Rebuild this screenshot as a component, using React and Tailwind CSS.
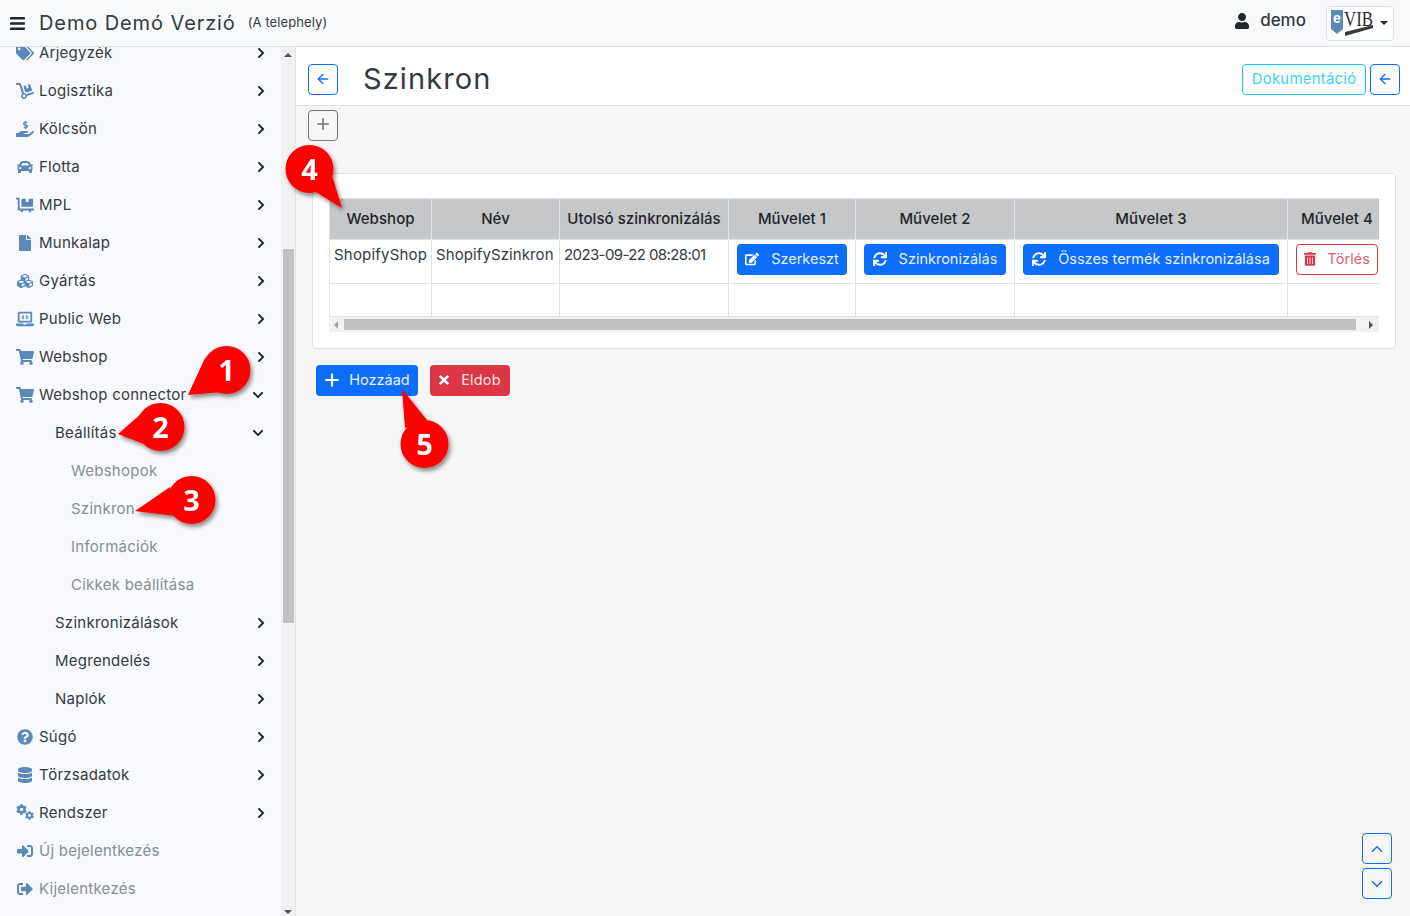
import { ArrowLeft, ChevronDown, ChevronUp, Plus } from "lucide-react";
import {
  FaBars, FaCar, FaChevronDown, FaChevronRight, FaCog, FaCubes, FaDatabase, FaDolly, FaDollyFlatbed,
  FaEdit, FaFile, FaHandHoldingUsd, FaLaptopCode, FaQuestionCircle, FaShoppingCart,
  FaSignInAlt, FaSignOutAlt, FaSync, FaTags, FaTimes, FaTrashAlt, FaUser,
} from "react-icons/fa";

// two cogs, one big at the top left and one small at the bottom right
function TwoCogs({ className }) {
  return (
    <span className={`${className} block`}>
      <FaCog className="absolute left-0 top-[-1px] h-[11px] w-[11px]" />
      <FaCog className="absolute left-[9px] top-[6px] h-[9px] w-[9px]" />
    </span>
  );
}

const menu = [
  { label: "Árjegyzék", icon: FaTags, arrow: "right" },
  { label: "Logisztika", icon: FaDolly, arrow: "right" },
  { label: "Kölcsön", icon: FaHandHoldingUsd, arrow: "right" },
  { label: "Flotta", icon: FaCar, arrow: "right" },
  { label: "MPL", icon: FaDollyFlatbed, arrow: "right" },
  { label: "Munkalap", icon: FaFile, arrow: "right" },
  { label: "Gyártás", icon: FaCubes, arrow: "right" },
  { label: "Public Web", icon: FaLaptopCode, arrow: "right" },
  { label: "Webshop", icon: FaShoppingCart, arrow: "right" },
  { label: "Webshop connector", icon: FaShoppingCart, arrow: "down" },
  { label: "Beállítás", level: 1, arrow: "down" },
  { label: "Webshopok", level: 2, muted: true },
  { label: "Szinkron", level: 2, muted: true },
  { label: "Információk", level: 2, muted: true },
  { label: "Cikkek beállítása", level: 2, muted: true },
  { label: "Szinkronizálások", level: 1, arrow: "right" },
  { label: "Megrendelés", level: 1, arrow: "right" },
  { label: "Naplók", level: 1, arrow: "right" },
  { label: "Súgó", icon: FaQuestionCircle, arrow: "right" },
  { label: "Törzsadatok", icon: FaDatabase, arrow: "right" },
  { label: "Rendszer", icon: TwoCogs, arrow: "right" },
  { label: "Új bejelentkezés", icon: FaSignInAlt, muted: true },
  { label: "Kijelentkezés", icon: FaSignOutAlt, muted: true },
];

const callouts = [
  { n: 1, cx: 226.5, cy: 370, tip: [188, 395], a: [205, 358], b: [222, 392] },
  { n: 2, cx: 160.5, cy: 427, tip: [118, 434], a: [142, 413], b: [144, 444] },
  { n: 3, cx: 191.5, cy: 500, tip: [135, 511], a: [170, 487], b: [175, 516] },
  { n: 4, cx: 309.5, cy: 169, tip: [342, 208], a: [331, 172], b: [314, 191] },
  { n: 5, cx: 424.5, cy: 444, tip: [402, 389], a: [405, 428], b: [427, 420] },
];

function MenuRow({ item }) {
  const Icon = item.icon;
  const indent = item.level === 2 ? "pl-[71px]" : item.level === 1 ? "pl-[55px]" : "pl-[39px]";
  return (
    <div className={`relative flex h-[38px] shrink-0 items-center ${indent}`}>
      {Icon && <Icon className="absolute left-[16px] top-[11px] h-4 w-[18px] text-[#5b88ba]" />}
      <span className={`text-[15px] tracking-[0.25px] ${item.muted ? "text-[#868d94]" : "text-[#343a40]"}`}>{item.label}</span>
      {item.arrow === "right" && <FaChevronRight className="absolute left-[255px] top-[13px] h-3 w-3 text-[#212529]" />}
      {item.arrow === "down" && <FaChevronDown className="absolute left-[252px] top-[13px] h-3 w-3 text-[#212529]" />}
    </div>
  );
}

function Callouts() {
  return (
    <svg className="pointer-events-none absolute left-0 top-0" width="1410" height="916">
      <defs>
        <filter id="sh" x="-30%" y="-30%" width="170%" height="170%">
          <feDropShadow dx="2" dy="3" stdDeviation="2" floodColor="#000" floodOpacity="0.45" />
        </filter>
      </defs>
      {callouts.map((c) => (
        <g key={c.n} filter="url(#sh)">
          <polygon points={`${c.tip[0]},${c.tip[1]} ${c.a[0]},${c.a[1]} ${c.b[0]},${c.b[1]}`} fill="#ff0000" />
          <circle cx={c.cx} cy={c.cy} r="24" fill="#ff0000" />
          <text x={c.cx} y={c.cy + 10.5} textAnchor="middle" fill="#fff" fontSize="29" fontWeight="700" fontFamily="'Open Sans', sans-serif">
            {c.n}
          </text>
        </g>
      ))}
    </svg>
  );
}

function ActionButton({ icon: Icon, label, width }) {
  return (
    <button className={`flex h-[31px] items-center justify-center gap-[12px] whitespace-nowrap rounded-[4px] bg-[#0d6efd] pb-[2px] text-[14.5px] tracking-normal text-[#e6f0ff] ${width}`}>
      <Icon className="h-[14px] w-[14px] text-white" />
      {label}
    </button>
  );
}

export default function App() {
  return (
    <div className="relative flex h-screen w-full flex-col overflow-hidden bg-[#f6f6f6] font-['Inter',sans-serif] text-[#212529]">
      <header className="flex h-[47px] shrink-0 items-center border-b border-[#dee2e6] bg-[#f8f9fa] pr-4">
        <FaBars className="ml-[9px] h-[17px] w-[17px] text-[#212529]" />
        <span className="ml-[13px] text-[20px] tracking-[0.9px] text-[#343a40]">Demo Demó Verzió</span>
        <span className="ml-3 text-[13px] tracking-[0.1px] text-[#343a40]">(A telephely)</span>
        <FaUser className="-mt-[4px] ml-auto h-4 w-4 text-[#212529]" />
        <span className="-mt-[4px] ml-[10px] text-[17px] font-medium text-[#343a40]">demo</span>
        <div className="ml-5 flex h-[35px] w-[68px] items-center rounded-[4px] border border-[#dee2e6] bg-white pl-1">
          <svg width="44" height="28" viewBox="0 0 44 28" className="overflow-visible">
            <polygon points="0,1 12,1 12,20 6,25 0,20" fill="#5b88ba" />
            <polygon points="14,27 14,23 42,16 42,19" fill="#3a3a3a" />
            <text x="2" y="14" fontSize="14" fontWeight="700" fontFamily="'Liberation Sans', sans-serif" fill="#fff">e</text>
            <text x="13" y="17" fontSize="20" textLength="29" lengthAdjust="spacingAndGlyphs" fontFamily="'Liberation Serif', serif" fill="#2b2b2b">VIB</text>
          </svg>
          <span className="ml-[5px] border-x-[4px] border-t-[4px] border-x-transparent border-t-[#212529]" />
        </div>
      </header>

      <div className="flex min-h-0 flex-1">
        <aside className="flex w-[281px] shrink-0 flex-col overflow-hidden bg-[#f8f9fc]">
          <div className="-mt-[13px] flex flex-col">
            {menu.map((item) => (
              <MenuRow key={item.label} item={item} />
            ))}
          </div>
        </aside>

        {/* scrollbar of the menu */}
        <div className="flex w-[15px] shrink-0 flex-col items-center border-r border-[#e3e3e3] bg-[#f1f1f1]">
          <span className="mt-[6px] border-x-[4px] border-b-[4px] border-x-transparent border-b-[#505050]" />
          <div className="mt-[192px] h-[374px] w-[11px] bg-[#c1c1c1]" />
          <span className="mb-[2px] mt-auto border-x-[4px] border-t-[4px] border-x-transparent border-t-[#505050]" />
        </div>

        <main className="min-w-0 flex-1">
          <div className="flex h-[59px] items-center border-b border-[#dee2e6] bg-white pl-3 pr-[10px] pt-[6px]">
            <button className="flex h-[31px] w-[30px] items-center justify-center rounded-[4px] border border-[#0d6efd] text-[#0d6efd]">
              <ArrowLeft size={16} />
            </button>
            <h1 className="ml-[25px] text-[29px] font-normal tracking-[1.1px] text-[#343a40]">Szinkron</h1>
            <button className="ml-auto flex h-[31px] w-[124px] items-center justify-center rounded-[4px] border border-[#0dcaf0] text-[15px] tracking-[0.2px] text-[#3cd3f2]">
              Dokumentáció
            </button>
            <button className="ml-1 flex h-[31px] w-[30px] items-center justify-center rounded-[4px] border border-[#0d6efd] text-[#0d6efd]">
              <ArrowLeft size={16} />
            </button>
          </div>

          <button className="ml-3 mt-1 flex h-[31px] w-[30px] items-center justify-center rounded-[4px] border border-[#6c757d] pb-[3px] text-[#6c757d]">
            <Plus size={18} />
          </button>

          <section className="ml-4 mr-[14px] mt-8 rounded-[4px] border border-[#dee2e6] bg-white pb-4 pl-4 pr-4 pt-6">
            <div className="overflow-hidden">
              <table className="w-[1070px] table-fixed border-collapse text-[15px]">
                <colgroup>
                  <col className="w-[102px]" />
                  <col className="w-[128px]" />
                  <col className="w-[169px]" />
                  <col className="w-[127px]" />
                  <col className="w-[159px]" />
                  <col className="w-[273px]" />
                  <col className="w-[112px]" />
                </colgroup>
                <thead>
                  <tr className="h-[41px] bg-[#c6c7c9]">
                    {["Webshop", "Név", "Utolsó szinkronizálás", "Művelet 1", "Művelet 2", "Művelet 3", "Művelet 4"].map((h) => (
                      <th key={h} className="whitespace-nowrap border border-[#dee2e6] px-1 text-center font-medium tracking-[0.05px] text-[#212529]">
                        <span className={h === "Művelet 4" ? "-ml-[13px]" : ""}>{h}</span>
                      </th>
                    ))}
                  </tr>
                </thead>
                <tbody>
                  <tr className="h-[44px]">
                    <td className="whitespace-nowrap border border-[#dee2e6] px-1 pt-[4px] align-top tracking-[0.2px] text-[#343a40]">ShopifyShop</td>
                    <td className="whitespace-nowrap border border-[#dee2e6] px-1 pt-[4px] align-top tracking-[0.1px] text-[#343a40]">ShopifySzinkron</td>
                    <td className="whitespace-nowrap border border-[#dee2e6] px-1 pt-[4px] align-top tracking-[-0.6px] text-[#343a40]">2023-09-22 08:28:01</td>
                    <td className="border border-[#dee2e6] pl-2 pt-1 align-top">
                      <ActionButton icon={FaEdit} label="Szerkeszt" width="w-[110px]" />
                    </td>
                    <td className="border border-[#dee2e6] pl-2 pt-1 align-top">
                      <ActionButton icon={FaSync} label="Szinkronizálás" width="w-[142px]" />
                    </td>
                    <td className="border border-[#dee2e6] pl-2 pt-1 align-top">
                      <ActionButton icon={FaSync} label="Összes termék szinkronizálása" width="w-[256px]" />
                    </td>
                    <td className="border border-[#dee2e6] pl-2 pt-1 align-top">
                      <button className="flex h-[31px] w-[82px] items-center justify-center gap-[11px] rounded-[4px] border border-[#dc3545] pb-[2px] text-[14.5px] text-[#e4606d]">
                        <FaTrashAlt className="h-[14px] w-[12px] text-[#dc3545]" />
                        Törlés
                      </button>
                    </td>
                  </tr>
                  <tr className="h-[33px]">
                    {[0, 1, 2, 3, 4, 5, 6].map((i) => (
                      <td key={i} className="border border-[#dee2e6]" />
                    ))}
                  </tr>
                </tbody>
              </table>
              {/* scrollbar of the table */}
              <div className="flex h-[15px] items-center bg-[#f1f1f1]">
                <span className="ml-[5px] border-y-[4px] border-r-[4px] border-y-transparent border-r-[#a3a3a3]" />
                <div className="ml-[6px] h-[11px] w-[1012px] bg-[#c1c1c1]" />
                <span className="ml-[13px] border-y-[4px] border-l-[4px] border-y-transparent border-l-[#505050]" />
              </div>
            </div>
          </section>

          <div className="ml-5 mt-4 flex gap-3">
            <button className="flex h-[31px] w-[102px] items-center justify-center gap-[7px] rounded-[4px] bg-[#0d6efd] pb-[1px] pr-[2px] text-[14.5px] text-[#e6f0ff]">
              <Plus size={20} strokeWidth={2.5} className="text-white" />
              Hozzáad
            </button>
            <button className="flex h-[31px] w-[80px] items-center justify-center gap-[10px] rounded-[4px] bg-[#dc3545] pb-[1px] pr-[2px] text-[14.5px] tracking-[0.2px] text-[#fbe4e6]">
              <FaTimes className="h-[14px] w-[14px] text-white" />
              Eldob
            </button>
          </div>
        </main>
      </div>

      <button className="absolute left-[1362px] top-[833px] flex h-[31px] w-[30px] items-center justify-center rounded-[4px] border border-[#0d6efd] text-[#0d6efd]">
        <ChevronUp size={18} />
      </button>
      <button className="absolute left-[1362px] top-[868px] flex h-[31px] w-[30px] items-center justify-center rounded-[4px] border border-[#0d6efd] text-[#0d6efd]">
        <ChevronDown size={18} />
      </button>

      <Callouts />
    </div>
  );
}
